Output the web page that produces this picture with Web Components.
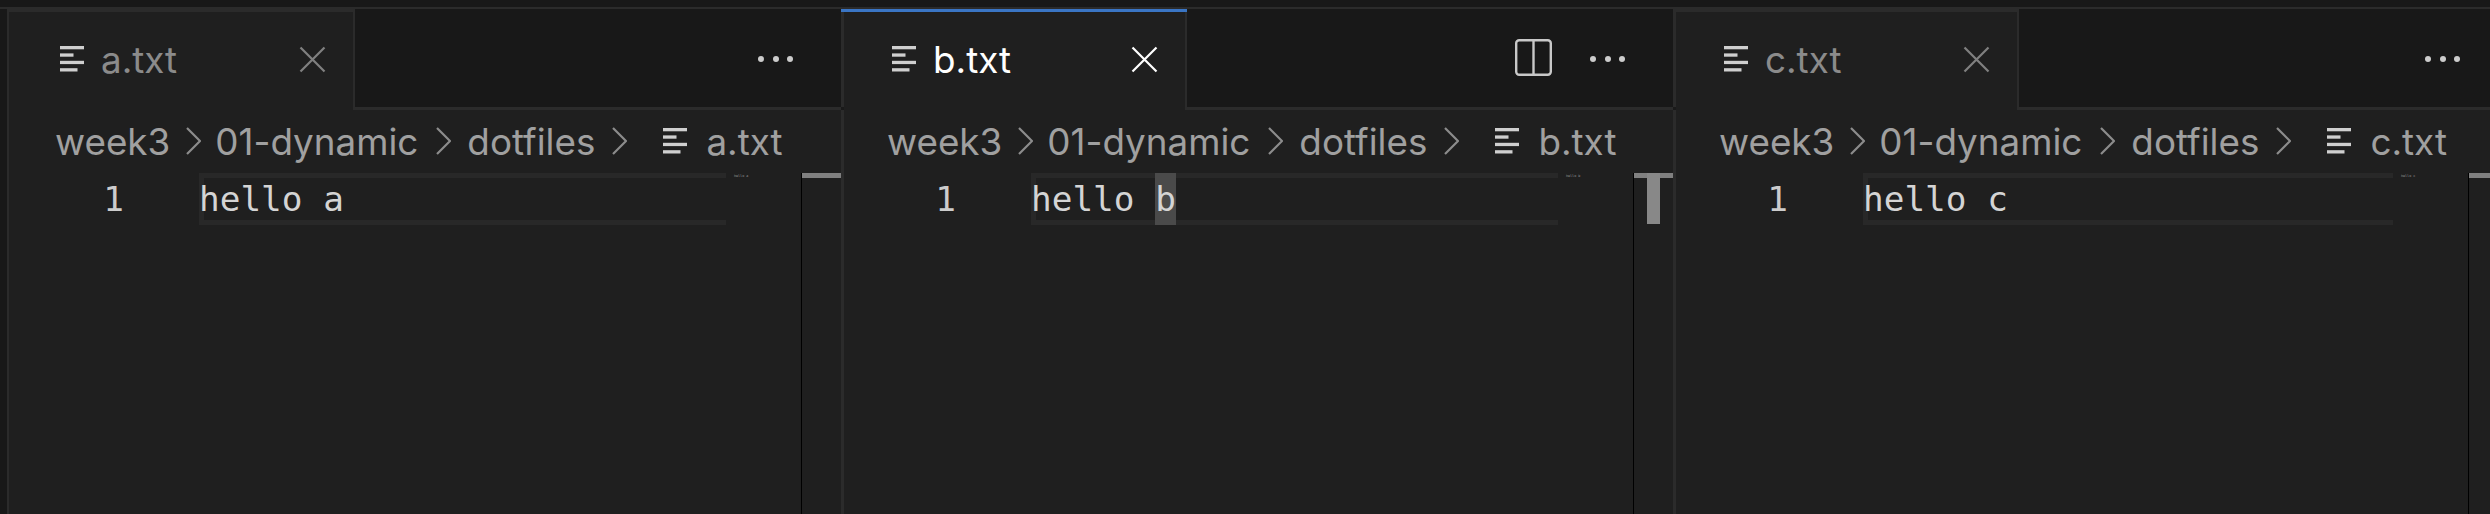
<!DOCTYPE html>
<html>
<head>
<meta charset="utf-8">
<title>dotfiles</title>
<style>
    html, body {
        margin: 0;
        height: 100%;
        background: #181818;
        overflow: hidden;
    }
    body {
        font-family: Inter, "Liberation Sans", sans-serif;
    }
</style>
</head>
<body>
<editor-group>
    <editor-pane file="a.txt" text="hello a" first></editor-pane>
    <editor-pane file="b.txt" text="hello b" active></editor-pane>
    <editor-pane file="c.txt" text="hello c" wide></editor-pane>
</editor-group>

<script>
const lineIcon = `
    <svg width="24" height="26" viewBox="0 0 24 26" fill="currentColor">
        <rect x="0" y="0" width="24" height="3.3"></rect>
        <rect x="0" y="7.4" width="13.5" height="3.3"></rect>
        <rect x="0" y="14.8" width="24" height="3.3"></rect>
        <rect x="0" y="22.2" width="17.5" height="3.3"></rect>
    </svg>`;

class FileTab extends HTMLElement {
    constructor() {
        super();
        this.attachShadow({ mode: 'open' });
        const name = this.getAttribute('name');
        this.shadowRoot.innerHTML = `
            <style>
                :host {
                    display: flex;
                    align-items: center;
                    box-sizing: border-box;
                    width: calc(343px + var(--lead, 0px));
                    height: 101px;
                    padding: 0 0 4px calc(48px + var(--lead, 0px));
                    background: #1f1f1f;
                    border-top: 3px solid #2b2b2b;
                    border-right: 2px solid #2b2b2b;
                    color: #8b8b8b;
                    position: relative;
                }
                :host([active]) {
                    color: #fff;
                }
                :host([active])::before {
                    content: '';
                    position: absolute;
                    left: -3px;
                    right: -2px;
                    top: -3px;
                    height: 3px;
                    background: #3a75c4;
                }
                .icon {
                    display: flex;
                    color: #cfcfcf;
                    margin-right: 17px;
                }
                .name {
                    font-size: 36.8px;
                    flex: 1;
                }
                .close {
                    display: flex;
                    margin-right: 27px;
                    color: #808080;
                }
                :host([active]) .close {
                    color: #fff;
                }
            </style>
            <span class="icon">${lineIcon}</span>
            <span class="name">${name}</span>
            <span class="close">
                <svg width="27" height="27" viewBox="0 0 27 27" fill="none" stroke="currentColor" stroke-width="2.2">
                    <path d="M1.5 1.5 L25.5 25.5 M25.5 1.5 L1.5 25.5"></path>
                </svg>
            </span>
        `;
    }
}

class PathBar extends HTMLElement {
    constructor() {
        super();
        this.attachShadow({ mode: 'open' });
        const chevron = (cls) => `
            <svg class="chev ${cls}" width="15" height="28" viewBox="0 0 15 28" fill="none" stroke="#8c8c8c" stroke-width="2.2">
                <path d="M1 1 L14 14 L1 27"></path>
            </svg>`;
        const file = this.getAttribute('file');
        this.shadowRoot.innerHTML = `
            <style>
                :host {
                    display: flex;
                    align-items: center;
                    height: 63px;
                    box-sizing: border-box;
                    padding: 0 0 1px calc(43px + var(--lead, 0px));
                    color: #a0a0a0;
                    font-size: 36.8px;
                    white-space: nowrap;
                }
                .chev {
                    margin: 0 15px 0 17px;
                    flex: none;
                }
                .chev.near {
                    margin: 0 14px 0 16px;
                }
                .chev.far {
                    margin: 0 16px 0 18px;
                }
                .icon {
                    display: flex;
                    color: #cfcfcf;
                    margin: 0 19px 0 21px;
                }
            </style>
            <span>week3</span>${chevron('near')}
            <span>01-dynamic</span>${chevron('far')}
            <span>dotfiles</span>${chevron('')}
            <span class="icon">${lineIcon}</span>
            <span>${file}</span>
        `;
    }
}

class CodeView extends HTMLElement {
    constructor() {
        super();
        this.attachShadow({ mode: 'open' });
        const text = this.getAttribute('text');
        const head = text.slice(0, -1);
        const last = text.slice(-1);
        this.shadowRoot.innerHTML = `
            <style>
                :host {
                    display: flex;
                    flex: 1;
                    align-items: stretch;
                    font-family: "DejaVu Sans Mono", "Liberation Mono", monospace;
                    font-size: 34.4px;
                    color: #d4d4d4;
                    white-space: pre;
                }
                .gutter {
                    flex: none;
                    box-sizing: border-box;
                    width: calc(187px + var(--lead, 0px));
                    height: 52px;
                    line-height: 52px;
                    padding-right: 75px;
                    text-align: right;
                    color: #cccccc;
                }
                .line {
                    flex: none;
                    width: calc(527px + var(--extra, 0px));
                    height: 52px;
                    line-height: 52px;
                    box-shadow: inset 5px 0 0 #282828, inset 0 5px 0 #282828, inset 0 -5px 0 #282828;
                }
                .word {
                    display: inline-block;
                }
                :host([active]) .word {
                    background: #4a4a4a;
                }
                .mini {
                    flex: none;
                    box-sizing: border-box;
                    width: 75px;
                    padding-left: 8px;
                    font-size: 3.4px;
                    line-height: 6px;
                    color: #9a9a9a;
                }
                .ruler {
                    flex: 1;
                    position: relative;
                    border-left: 1px solid #000;
                }
                .ruler::before {
                    content: '';
                    position: absolute;
                    left: 0;
                    right: 0;
                    top: 0;
                    height: 5px;
                    background: #808080;
                }
                :host([active]) .ruler::after {
                    content: '';
                    position: absolute;
                    left: 13px;
                    width: 13px;
                    top: 0;
                    height: 51px;
                    background: #888888;
                }
            </style>
            <div class="gutter">1</div>
            <div class="line">${head}<span class="word">${last}</span></div>
            <div class="mini">${text}</div>
            <div class="ruler"></div>
        `;
    }
}

class EditorPane extends HTMLElement {
    constructor() {
        super();
        this.attachShadow({ mode: 'open' });
        const file = this.getAttribute('file');
        const text = this.getAttribute('text');
        const active = this.hasAttribute('active');
        const flag = active ? 'active' : '';
        const split = active ? `
            <svg class="split" width="37" height="37" viewBox="0 0 37 37" fill="none" stroke="#c8c8c8" stroke-width="2.4">
                <rect x="1.2" y="1.2" width="34.6" height="34.6" rx="3"></rect>
                <path d="M18.5 1 V36"></path>
            </svg>` : '';
        this.shadowRoot.innerHTML = `
            <style>
                :host {
                    display: flex;
                    flex-direction: column;
                    flex: none;
                    box-sizing: border-box;
                    width: 832px;
                    border-left: 3px solid #2b2b2b;
                    background: #1f1f1f;
                    position: relative;
                }
                :host([first]) {
                    width: 834px;
                    margin-left: 7px;
                    border-left-width: 2px;
                    --lead: 3px;
                }
                :host([wide]) {
                    width: 835px;
                    --extra: 3px;
                }
                :host(:not([first]))::before {
                    content: '';
                    position: absolute;
                    left: -3px;
                    width: 3px;
                    top: 98px;
                    height: 3px;
                    background: #1a1a1a;
                }
                .tabs {
                    display: flex;
                    height: 101px;
                    flex: none;
                    background: #181818;
                    position: relative;
                }
                .strip {
                    flex: 1;
                    display: flex;
                    justify-content: flex-end;
                    align-items: center;
                    gap: 38px;
                    padding: 2px 48px 0 0;
                    border-bottom: 3px solid #2b2b2b;
                }
                .split {
                    margin-bottom: 3px;
                }
                .dots {
                    display: flex;
                    gap: 8.5px;
                }
                .dots i {
                    width: 6px;
                    height: 6px;
                    border-radius: 50%;
                    background: #cccccc;
                }
            </style>
            <div class="tabs">
                <file-tab name="${file}" ${flag}></file-tab>
                <div class="strip">
                    ${split}
                    <span class="dots"><i></i><i></i><i></i></span>
                </div>
            </div>
            <path-bar file="${file}"></path-bar>
            <code-view text="${text}" ${flag}></code-view>
        `;
    }
}

class EditorGroup extends HTMLElement {
    constructor() {
        super();
        this.attachShadow({ mode: 'open' });
        this.shadowRoot.innerHTML = `
            <style>
                :host {
                    display: flex;
                    box-sizing: border-box;
                    height: 514px;
                    width: 2490px;
                    overflow: hidden;
                    background: #181818;
                    padding-top: 9px;
                    box-shadow: inset 0 7px 0 #181818, inset 0 9px 0 #2b2b2b;
                }
            </style>
            <slot></slot>
        `;
    }
}

customElements.define('file-tab', FileTab);
customElements.define('path-bar', PathBar);
customElements.define('code-view', CodeView);
customElements.define('editor-pane', EditorPane);
customElements.define('editor-group', EditorGroup);
</script>
</body>
</html>
